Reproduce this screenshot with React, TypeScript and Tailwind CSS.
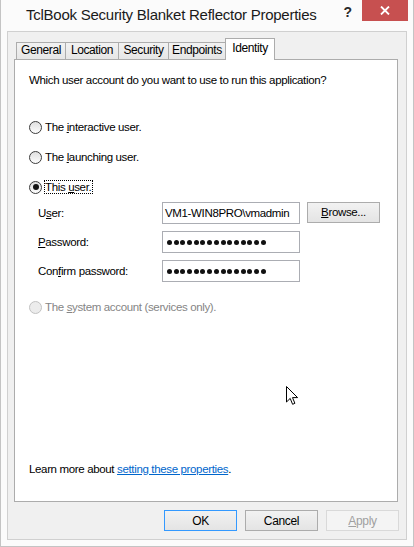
import React from 'react';

const Radio: React.FC<{ checked?: boolean; disabled?: boolean }> = ({ checked, disabled }) => (
  <span
    className={
      disabled
        ? 'flex w-[13px] h-[13px] rounded-full border border-[#c2c2c2] bg-[#ececec] items-center justify-center shrink-0'
        : 'flex w-[13px] h-[13px] rounded-full border border-[#3c3c3c] bg-linear-to-b from-[#e0e0e0] to-[#fdfdfd] items-center justify-center shrink-0'
    }
  >
    {checked && <span className="w-[6px] h-[6px] rounded-full bg-[#141414]" />}
  </span>
);

const Tab: React.FC<{ label: string; width: string; last?: boolean }> = ({ label, width, last }) => (
  <div
    className={`${width} h-[17px] border-l border-t ${last ? 'border-r' : ''} border-[#acacac] bg-linear-to-b from-[#f2f2f2] to-[#e6e6e6] text-center leading-[15px]`}
  >
    {label}
  </div>
);

const Field: React.FC<{ label: React.ReactNode; children: React.ReactNode; mt: string }> = ({ label, children, mt }) => (
  <div className={`flex items-center h-[22px] pl-[9px] ${mt}`}>
    <div className="w-[124px] leading-[14px]">{label}</div>
    {children}
  </div>
);

const Dots: React.FC = () => (
  <div className="flex gap-[1.7px] pl-[4px]">
    {Array.from({ length: 15 }).map((_, i) => (
      <span key={i} className="w-[5px] h-[5px] rounded-full bg-[#111]" />
    ))}
  </div>
);

export default function App() {
  return (
    <div className="relative w-[414px] h-[547px] bg-[#fbfbfb] border-x border-b border-[#c4c4c4] flex flex-col font-['Liberation_Sans',Arial,sans-serif] text-[11.5px] tracking-[-0.35px] text-black">
      {/* title bar */}
      <div className="flex h-[31px] items-start">
        <div className="pl-[25px] pt-[6px] text-[15px] leading-[18px] tracking-[-0.25px] text-[#1a1a1a]">
          TclBook Security Blanket Reflector Properties
        </div>
        <div className="ml-auto flex items-start">
          <div className="w-[29px] pt-[5px] text-center text-[14px] leading-[14px] font-bold text-[#2a2a2a]">?</div>
          <div className="mr-[5px] w-[46px] h-[21px] bg-[#c75050] flex items-center justify-center">
            <svg width="10" height="9" viewBox="0 0 10 9">
              <path d="M1 0.5 L9 8.5 M9 0.5 L1 8.5" stroke="#fff" strokeWidth="1.8" />
            </svg>
          </div>
        </div>
      </div>

      {/* client area */}
      <div className="mx-[6px] h-[509px] border border-[#d0d0d0] bg-[#f0f0f0] flex flex-col">
        <div className="flex items-end h-[27px] pl-[8px] text-[12px] tracking-[-0.4px]">
          <Tab label="General" width="w-[49px]" />
          <Tab label="Location" width="w-[53px]" />
          <Tab label="Security" width="w-[50px]" />
          <Tab label="Endpoints" width="w-[57px]" />
          <div className="relative z-10 -mb-px w-[50px] h-[22px] border-l border-t border-r border-[#acacac] bg-white text-center pt-[1px] leading-[16px]">
            Identity
          </div>
        </div>

        <div className="ml-[6px] mr-[8px] h-[443px] border border-[#acacac] bg-white flex flex-col pl-[14px]">
          <div className="mt-[10px] h-[20px] leading-[20px]">
            Which user account do you want to use to run this application?
          </div>

          <div className="mt-[27px] h-[20px] flex items-center">
            <Radio />
            <span className="ml-[2px] border border-transparent leading-[12px]">
              The <u>i</u>nteractive user.
            </span>
          </div>
          <div className="mt-[10px] h-[20px] flex items-center">
            <Radio />
            <span className="ml-[2px] border border-transparent leading-[12px]">
              The <u>l</u>aunching user.
            </span>
          </div>
          <div className="mt-[10px] h-[20px] flex items-center">
            <Radio checked />
            <span className="ml-[2px] border border-dotted border-black leading-[12px] pr-[1px]">
              This <u>u</u>ser.
            </span>
          </div>

          <Field label={<>U<u>s</u>er:</>} mt="mt-[5px]">
            <div className="w-[138px] h-[22px] border border-[#abadb3] flex items-center pl-[2px] leading-[14px]">
              VM1-WIN8PRO\vmadmin
            </div>
            <div className="ml-[7px] self-start w-[73px] h-[21px] border border-[#acacac] bg-linear-to-b from-[#f2f2f2] to-[#e4e4e4] flex items-center justify-center">
              <span>
                <u>B</u>rowse...
              </span>
            </div>
          </Field>
          <Field label={<><u>P</u>assword:</>} mt="mt-[7px]">
            <div className="w-[138px] h-[22px] border border-[#abadb3] flex items-center">
              <Dots />
            </div>
          </Field>
          <Field label={<>Con<u>f</u>irm password:</>} mt="mt-[7px]">
            <div className="w-[138px] h-[22px] border border-[#abadb3] flex items-center">
              <Dots />
            </div>
          </Field>

          <div className="mt-[15px] h-[20px] flex items-center">
            <Radio disabled />
            <span className="ml-[2px] border border-transparent leading-[12px] text-[#858585]">
              The <u>s</u>ystem account (services only).
            </span>
          </div>

          <div className="mt-auto mb-[22px] h-[20px] leading-[20px]">
            Learn more about{' '}
            <span className="text-[#0066cc] underline">setting these properties</span>.
          </div>
        </div>

        <div className="mt-[8px] flex justify-end gap-[8px] pr-[7px] text-[12px]">
          <div className="w-[73px] h-[21px] border border-[#3399ff] bg-linear-to-b from-[#f2f2f2] to-[#e4e4e4] flex items-center justify-center">
            OK
          </div>
          <div className="w-[73px] h-[21px] border border-[#acacac] bg-linear-to-b from-[#f2f2f2] to-[#e4e4e4] flex items-center justify-center">
            Cancel
          </div>
          <div className="w-[73px] h-[21px] border border-[#d9d9d9] bg-[#f4f4f4] text-[#a0a0a0] flex items-center justify-center">
            <span>
              <u>A</u>pply
            </span>
          </div>
        </div>
      </div>

      {/* mouse pointer */}
      <svg className="absolute left-[285px] top-[386px]" width="13" height="20" viewBox="0 0 13 20">
        <path
          d="M0.5 0.5 L0.5 16 L4.2 12.4 L6.6 18.3 L8.9 17.3 L6.5 11.6 L11.6 11.6 Z"
          fill="#fff"
          stroke="#000"
          strokeWidth="1"
          strokeLinejoin="miter"
        />
      </svg>
    </div>
  );
}
